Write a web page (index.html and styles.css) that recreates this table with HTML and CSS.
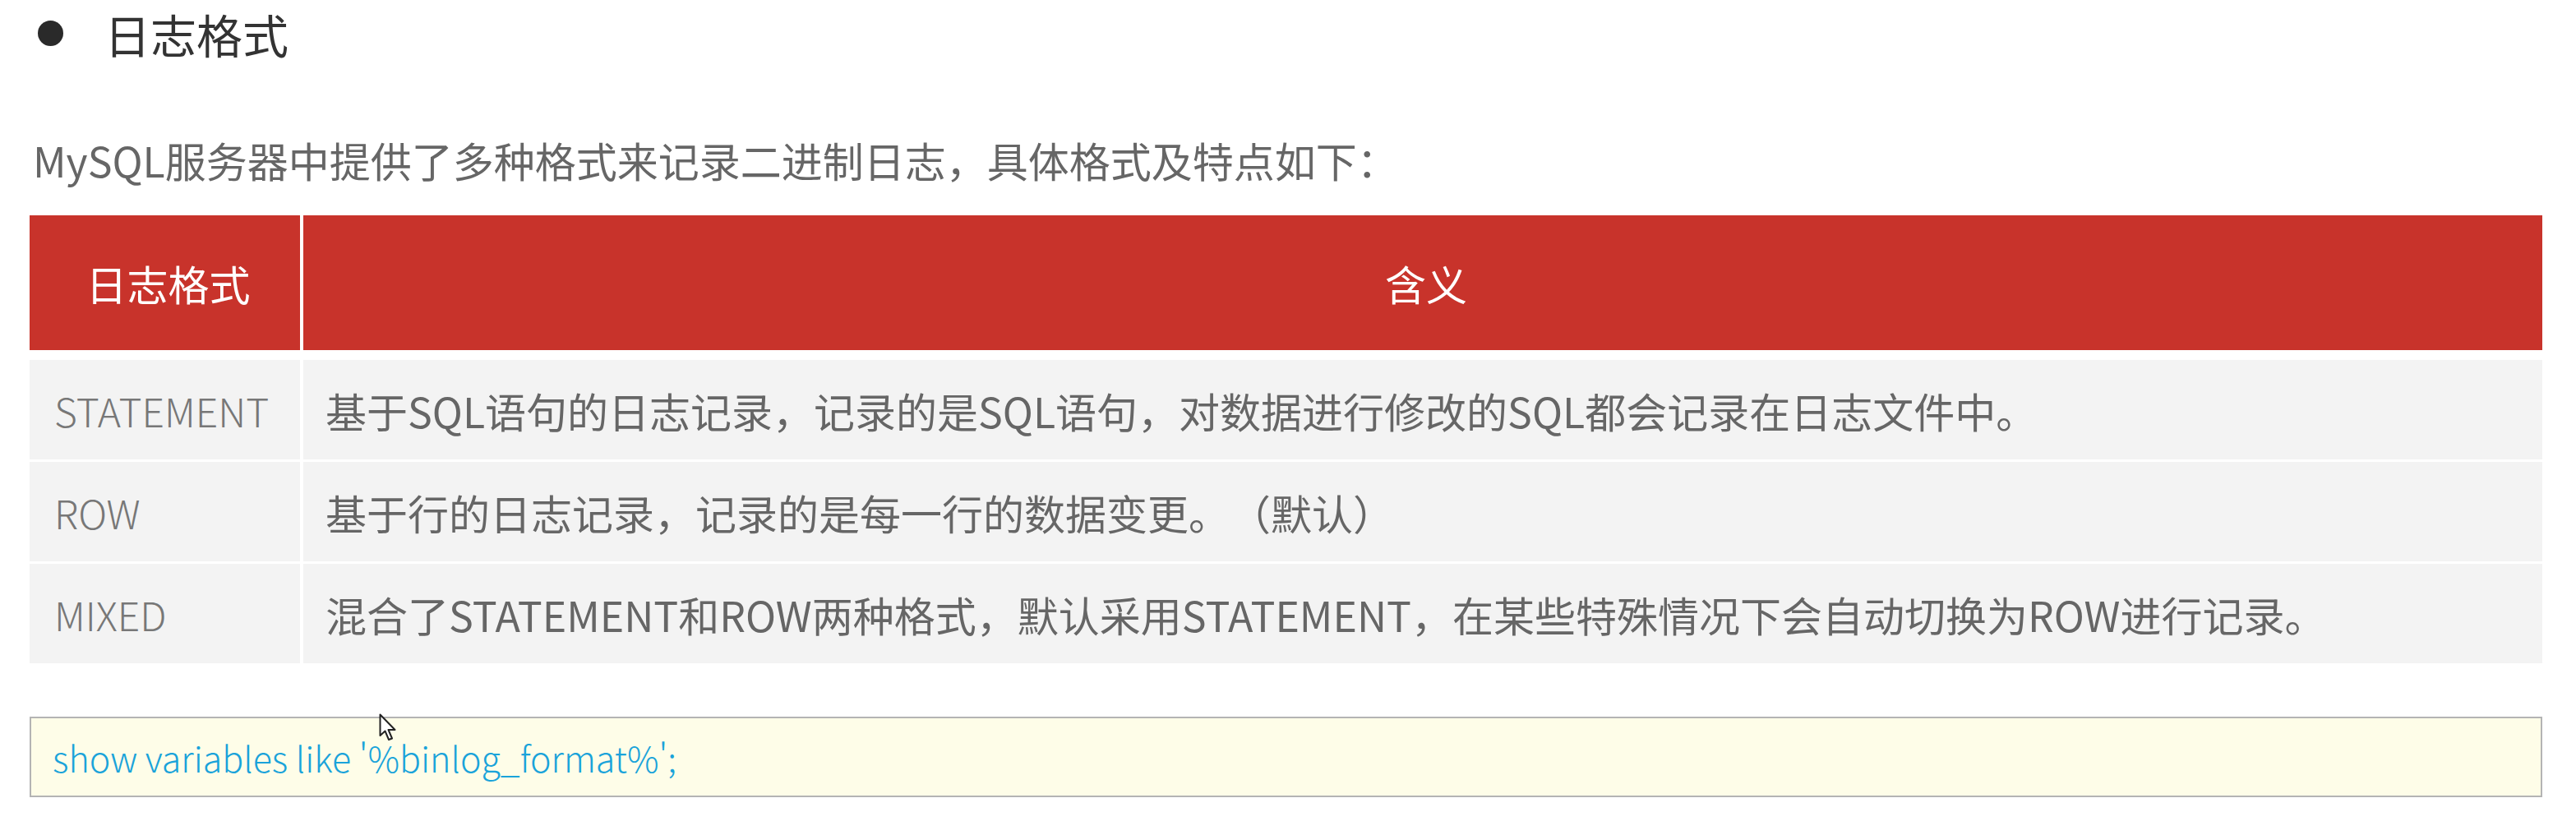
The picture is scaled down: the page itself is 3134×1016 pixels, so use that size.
FILE: index.html
```html
<!DOCTYPE html>
<html lang="zh-CN">
<head>
  <meta charset="UTF-8" />
  <title>日志格式</title>
  <link rel="stylesheet" href="styles.css">
</head>
<body>
  <div class="page">
    <h2 class="title"><span class="dot"></span>日志格式</h2>

    <p class="intro">MySQL服务器中提供了多种格式来记录二进制日志，具体格式及特点如下：</p>

    <!-- FORMAT TABLE -->
    <div class="grid">
      <div class="th">日志格式</div>
      <div class="th">含义</div>

      <div class="key">STATEMENT</div>
      <div class="val">基于SQL语句的日志记录，记录的是SQL语句，对数据进行修改的SQL都会记录在日志文件中。</div>

      <div class="key">ROW</div>
      <div class="val">基于行的日志记录，记录的是每一行的数据变更。（默认）</div>

      <div class="key">MIXED</div>
      <div class="val">混合了STATEMENT和ROW两种格式，默认采用STATEMENT，在某些特殊情况下会自动切换为ROW进行记录。</div>
    </div>

    <!-- CODE -->
    <div class="code">
      <span>show variables like '%binlog_format%';</span>
      <svg class="cursor" width="22" height="36" viewBox="0 0 22 36">
        <path d="M1.5 1.5 L1.5 27 L7.5 21.5 L12 32 L16 30.5 L11.5 20 L19.5 20 Z" fill="#fff" stroke="#222" stroke-width="2" stroke-linejoin="round"/>
      </svg>
    </div>
  </div>
</body>
</html>
```

FILE: styles.css
```css
body {
  margin: 0;
  background: #fff;
  font-family: "Noto Sans CJK SC", "Noto Sans", sans-serif;
  text-spacing-trim: space-all;
}
.page {
  padding: 0 41px 0 36px;
}
.title {
  display: flex;
  align-items: center;
  height: 80px;
  margin: 0;
  padding-left: 10px;
  font-size: 56px;
  font-weight: 400;
  color: #333;
}
.dot {
  width: 31px;
  height: 31px;
  border-radius: 50%;
  background: #2a2a2a;
  margin-right: 50px;
}
.intro {
  margin: 79px 0 33px 4px;
  line-height: 70px;
  font-size: 50px;
  color: #666;
}
.grid {
  display: grid;
  grid-template-columns: 329px 1fr;
  column-gap: 4px;
  row-gap: 3px;
}
.th {
  background: #c8332b;
  color: #fff;
  height: 164px;
  margin-bottom: 9px;
  display: flex;
  align-items: center;
  justify-content: center;
  font-size: 50px;
  padding-left: 8px;
}
.key, .val {
  background: #f3f3f3;
  height: 121px;
  display: flex;
  align-items: center;
  font-size: 50px;
}
.key {
  padding-left: 30px;
  font-size: 48px;
  color: #777;
  font-weight: 300;
}
.val {
  padding-left: 27px;
  color: #666;
}
.code {
  position: relative;
  margin-top: 65px;
  height: 94px;
  border: 2px solid #b4b4b4;
  background: #fefde8;
  display: flex;
  align-items: center;
  padding-left: 26px;
  font-size: 43px;
  font-weight: 300;
  color: #1aa3da;
}
.cursor {
  position: absolute;
  left: 423px;
  top: -6px;
}
```
